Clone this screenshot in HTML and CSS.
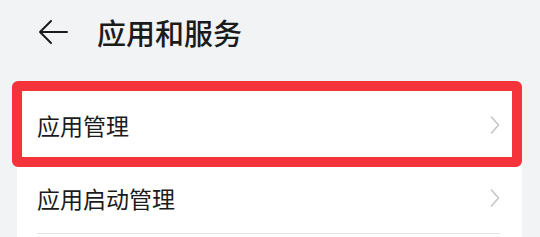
FILE: index.html
```html
<!DOCTYPE html>
<html lang="zh-CN">
<head>
    <meta charset="UTF-8">
    <meta name="viewport" content="width=device-width, initial-scale=1.0">
    <title>应用和服务</title>
    <link rel="stylesheet" href="styles.css">
</head>
<body>
    <!-- Title Bar -->
    <div class="title-bar">
        <svg class="back-icon" width="30" height="26" viewBox="0 0 30 26">
            <path d="M29 13 H2 M13 2 L2 13 L13 24" fill="none" stroke="#1b1b1b" stroke-width="2" stroke-linecap="round" stroke-linejoin="round"/>
        </svg>
        <h1>应用和服务</h1>
    </div>

    <!-- Settings Card -->
    <div class="card">
        <div class="item">
            <div class="item-inner">
                <span>应用管理</span>
                <svg class="chevron" width="10" height="20" viewBox="0 0 10 20">
                    <polyline points="1.5,2 8.5,10 1.5,18" fill="none" stroke="#c6c6c6" stroke-width="1.6" stroke-linecap="round" stroke-linejoin="round"/>
                </svg>
            </div>
            <div class="highlight"></div>
        </div>
        <div class="item">
            <div class="item-inner">
                <span>应用启动管理</span>
                <svg class="chevron" width="10" height="20" viewBox="0 0 10 20">
                    <polyline points="1.5,2 8.5,10 1.5,18" fill="none" stroke="#c6c6c6" stroke-width="1.6" stroke-linecap="round" stroke-linejoin="round"/>
                </svg>
            </div>
        </div>
    </div>
</body>
</html>
```

FILE: styles.css
```css
/* General Reset */
* {
    margin: 0;
    padding: 0;
    box-sizing: border-box;
}

body {
    background-color: #f1f3f5;
    color: #1b1b1b;
    font-family: "Noto Sans CJK SC", "Noto Sans", sans-serif;
    width: 540px;
    height: 237px;
    overflow: hidden;
}

/* Title Bar */
.title-bar {
    display: flex;
    align-items: center;
    height: 64px;
    padding-left: 38px;
}

.back-icon {
    margin-right: 29px;
}

h1 {
    font-size: 29px;
    font-weight: 500;
    line-height: 1;
}

/* Settings Card (continues below the visible area) */
.card {
    margin: 24px 18px 0 17px;
    padding-bottom: 40px;
    background: #fff;
    border-radius: 20px;
}

.item {
    position: relative;
}

.item-inner {
    display: flex;
    justify-content: space-between;
    align-items: center;
    height: 73px;
    margin: 0 22px 0 20px;
    border-bottom: 1px solid #e3e4e6;
    font-size: 23px;
    line-height: 1;
}

.item-inner span {
    margin-top: 2px;
}

.chevron {
    margin-top: 2px;
}

/* Red highlight frame drawn over the first row */
.highlight {
    position: absolute;
    top: -7px;
    left: -5px;
    right: 0;
    bottom: -6px;
    border: 10px solid #f5333a;
    border-radius: 6px;
    pointer-events: none;
}
```
